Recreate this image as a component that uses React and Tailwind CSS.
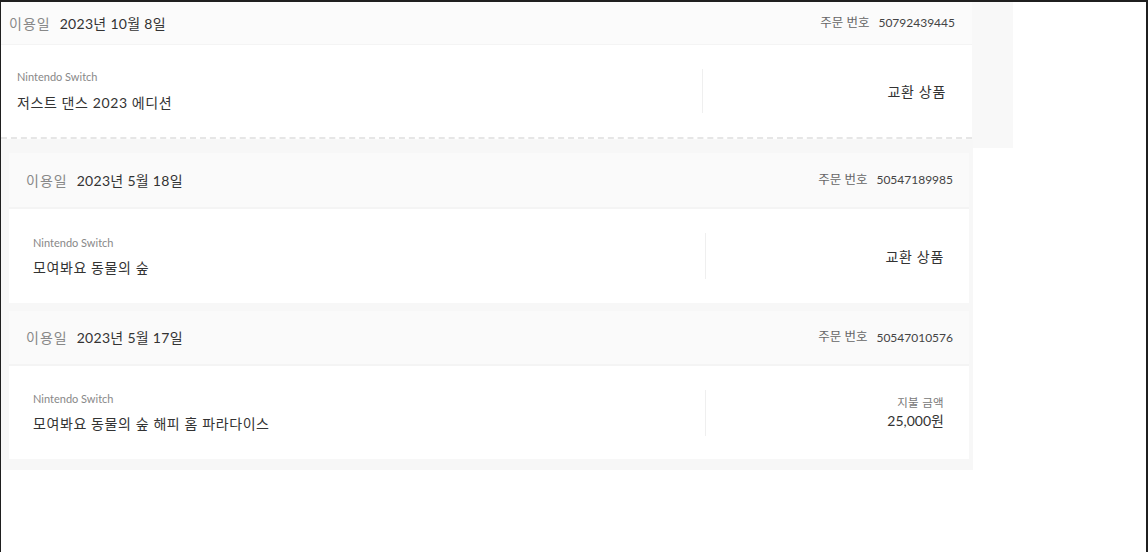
const font = { fontFamily: "Lato, 'Noto Sans CJK KR', sans-serif" };

function Header({ date, order, className }) {
  return (
    <div className={`flex items-center justify-between ${className}`}>
      <div className="flex items-center gap-[9px]">
        <span className="text-[14px] tracking-[1px] text-[#888]">이용일</span>
        <span className="text-[14px] tracking-[0.3px] text-[#333]">{date}</span>
      </div>
      <div className="flex items-center gap-[9px]">
        <span className="text-[12.5px] text-[#666]">주문 번호</span>
        <span className="text-[12px] text-[#444]">{order}</span>
      </div>
    </div>
  );
}

function Right({ price }) {
  if (price) {
    return (
      <div className="flex flex-col items-end">
        <span className="text-[11.5px] leading-[16px] tracking-[0.3px] text-[#777]">지불 금액</span>
        <span className="text-[14px] leading-[20px] text-[#333]">{price}</span>
      </div>
    );
  }
  return <span className="text-[14px] tracking-[0.7px] text-[#333]">교환 상품</span>;
}

function Card({ date, order, title, price, headH = 'h-[56px]', bodyH = 'h-[94px]' }) {
  return (
    <div className="bg-white">
      <Header date={date} order={order} className={`${headH} bg-[#fafafa] border-b-2 border-[#f4f4f4] pl-[17px] pr-4`} />
      <div className={`${bodyH} flex items-center`}>
        <div className="flex-1 pl-6 flex flex-col gap-[7px]">
          <span className="text-[11px] leading-[16px] text-[#888]">Nintendo Switch</span>
          <span className="text-[14px] leading-[20px] tracking-[0.6px] text-[#333]">{title}</span>
        </div>
        <div className="w-[264px] h-[46px] border-l border-[#efefef] flex items-center justify-end pr-[25px]">
          <Right price={price} />
        </div>
      </div>
    </div>
  );
}

export default function App() {
  return (
    <div className="h-[552px] border-t-2 border-l border-r-2 border-[#1f1f1f] bg-white overflow-hidden" style={font}>
      <div className="w-[1012px] h-[146px] bg-[#f8f8f8]">
        <div className="w-[971px] bg-white border-b-2 border-dashed border-[#e6e6e6]">
          <Header date="2023년 10월 8일" order="50792439445" className="h-[43px] bg-[#fbfbfb] border-b border-[#f4f4f4] pl-2 pr-[17px]" />
          <div className="h-[92px] flex items-center">
            <div className="flex-1 pl-4 flex flex-col gap-[8px]">
              <span className="text-[11px] leading-[16px] text-[#888]">Nintendo Switch</span>
              <span className="text-[14px] leading-[20px] tracking-[0.6px] text-[#333]">저스트 댄스 2023 에디션</span>
            </div>
            <div className="w-[270px] h-[44px] border-l border-[#efefef] flex items-center justify-end pr-[26px]">
              <Right />
            </div>
          </div>
        </div>
      </div>
      <div className="-mt-2 w-[972px] bg-[#f7f7f7] pt-[13px] pl-2 pr-[4px] pb-[11px] flex flex-col gap-2">
        <Card date="2023년 5월 18일" order="50547189985" title="모여봐요 동물의 숲" />
        <Card date="2023년 5월 17일" order="50547010576" title="모여봐요 동물의 숲 해피 홈 파라다이스" price="25,000원" headH="h-[55px]" bodyH="h-[93px]" />
      </div>
    </div>
  );
}
